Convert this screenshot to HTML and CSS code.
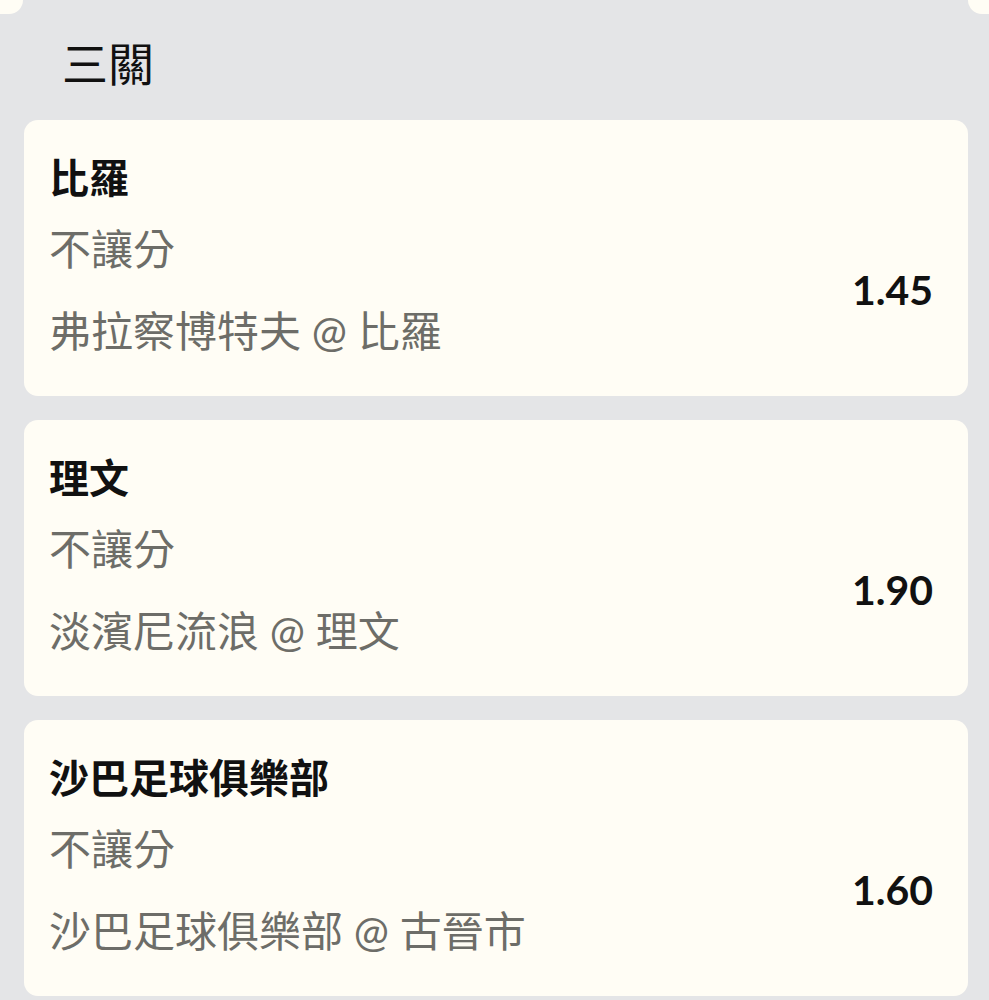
FILE: index.html
```html
<!DOCTYPE html>
<html lang="zh-Hant">
<head>
<meta charset="utf-8">
<title>三關</title>
<link rel="stylesheet" href="styles.css">
</head>
<body>
<div class="page">
  <div class="top-strip">
    <div class="peek peek-left"></div>
    <div class="peek peek-right"></div>
  </div>
  <h1 class="section-title">三關</h1>
  <div class="card-list">
    <div class="card">
      <div class="card-title">比羅</div>
      <div class="card-body">
        <div class="card-info">
          <div class="card-sub">不讓分</div>
          <div class="card-sub">弗拉察博特夫 @ 比羅</div>
        </div>
        <div class="card-odds">1.45</div>
      </div>
    </div>
    <div class="card">
      <div class="card-title">理文</div>
      <div class="card-body">
        <div class="card-info">
          <div class="card-sub">不讓分</div>
          <div class="card-sub">淡濱尼流浪 @ 理文</div>
        </div>
        <div class="card-odds">1.90</div>
      </div>
    </div>
    <div class="card">
      <div class="card-title">沙巴足球俱樂部</div>
      <div class="card-body">
        <div class="card-info">
          <div class="card-sub">不讓分</div>
          <div class="card-sub">沙巴足球俱樂部 @ 古晉市</div>
        </div>
        <div class="card-odds">1.60</div>
      </div>
    </div>
  </div>
</div>
</body>
</html>
```
FILE: styles.css
```css
html, body {
  margin: 0;
  padding: 0;
  background: #e4e5e7;
}

body {
  font-family: Lato, "Noto Sans CJK TC", sans-serif;
  color: #111111;
}

.page {
  width: 989px;
  height: 1000px;
  overflow: hidden;
}

.top-strip {
  display: flex;
  justify-content: space-between;
  height: 14px;
}

.peek {
  background: #fffdf5;
  height: 14px;
}

.peek-left {
  width: 23px;
  border-bottom-right-radius: 14px;
}

.peek-right {
  width: 21px;
  border-bottom-left-radius: 14px;
}

.section-title {
  margin: 20px 0 32px 62px;
  font-family: "Noto Sans CJK TC", sans-serif;
  font-weight: 400;
  font-size: 46px;
  line-height: 54px;
  color: #111111;
}

.card-list {
  display: flex;
  flex-direction: column;
  gap: 24px;
  margin: 0 21px 0 24px;
}

.card {
  background: #fffdf5;
  border-radius: 14px;
  height: 276px;
  box-sizing: border-box;
  padding: 28px 35px 0 25px;
}

.card-title {
  font-family: "Noto Sans CJK TC", sans-serif;
  font-weight: 700;
  font-size: 40px;
  line-height: 56px;
  color: #111111;
}

.card-body {
  display: flex;
  align-items: center;
  justify-content: space-between;
  margin-top: 17px;
}

.card-info {
  display: flex;
  flex-direction: column;
  gap: 26px;
}

.card-sub {
  font-size: 42px;
  line-height: 56px;
  color: #6d6d68;
}

.card-odds {
  font-family: Lato, sans-serif;
  font-weight: 700;
  font-size: 41px;
  line-height: 48px;
  color: #111111;
}
```
